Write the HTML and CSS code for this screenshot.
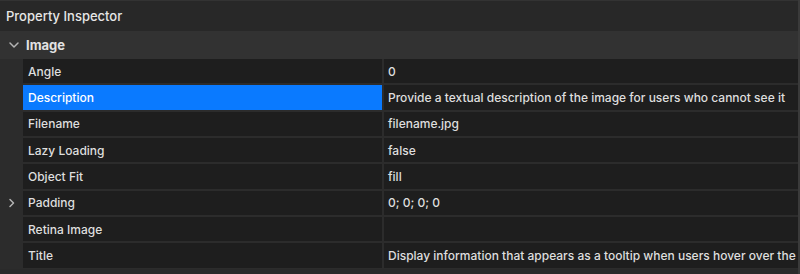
FILE: index.html
```html
<!DOCTYPE html>
<html lang="en">
<head>
  <meta charset="UTF-8">
  <meta name="viewport" content="width=device-width, initial-scale=1">
  <title>Property Inspector</title>
  <link rel="stylesheet" href="styles.css">
</head>
<body>
  <div class="inspector">
    <div class="title-bar">Property Inspector</div>
    <div class="group">
      <div class="group-head">
        <span class="chevron">
          <svg width="12" height="12" viewBox="0 0 12 12"><path d="M2 4l4 4 4-4" fill="none" stroke="#b4b4b4" stroke-width="1.5" stroke-linecap="round" stroke-linejoin="round"/></svg>
        </span>
        <span class="group-name">Image</span>
      </div>
      <div class="props">
        <div class="row">
          <span class="toggle"></span>
          <span class="name">Angle</span>
          <span class="value">0</span>
        </div>
        <div class="row selected">
          <span class="toggle"></span>
          <span class="name">Description</span>
          <span class="value">Provide a textual description of the image for users who cannot see it</span>
        </div>
        <div class="row">
          <span class="toggle"></span>
          <span class="name">Filename</span>
          <span class="value">filename.jpg</span>
        </div>
        <div class="row">
          <span class="toggle"></span>
          <span class="name">Lazy Loading</span>
          <span class="value">false</span>
        </div>
        <div class="row">
          <span class="toggle"></span>
          <span class="name">Object Fit</span>
          <span class="value">fill</span>
        </div>
        <div class="row">
          <span class="toggle">
            <svg width="10" height="12" viewBox="0 0 10 12"><path d="M3 2.5l3.5 3.5L3 9.5" fill="none" stroke="#b4b4b4" stroke-width="1.5" stroke-linecap="round" stroke-linejoin="round"/></svg>
          </span>
          <span class="name">Padding</span>
          <span class="value">0; 0; 0; 0</span>
        </div>
        <div class="row">
          <span class="toggle"></span>
          <span class="name">Retina Image</span>
          <span class="value"></span>
        </div>
        <div class="row">
          <span class="toggle"></span>
          <span class="name">Title</span>
          <span class="value">Display information that appears as a tooltip when users hover over the image</span>
        </div>
      </div>
    </div>
  </div>
</body>
</html>
```

FILE: styles.css
```css
* {
  margin: 0;
  padding: 0;
  box-sizing: border-box;
}

body {
  font-family: Inter, "Liberation Sans", sans-serif;
  font-size: 12px;
  color: #dedede;
  background: #2a2a2a;
  width: 800px;
  height: 274px;
  overflow: hidden;
}

.inspector {
  height: 274px;
  border-right: 2px solid #3a3a3a;
  background: #2a2a2a;
}

.title-bar {
  height: 31px;
  padding: 0 6px;
  display: flex;
  align-items: center;
  font-size: 13px;
  font-weight: 500;
  color: #e6e6e6;
  background: #282828;
  border-top: 1px solid #333;
}

.group {
  background: #2c2c2c;
}

.group-head {
  height: 28px;
  display: flex;
  align-items: center;
  background: #323232;
}

.chevron {
  width: 26px;
  display: flex;
  justify-content: center;
  padding-left: 1px;
}

.group-name {
  font-size: 13px;
  font-weight: 700;
  color: #e2e2e2;
}

.props {
  display: flex;
  flex-direction: column;
  gap: 2px;
  padding-bottom: 1px;
  background: #2c2c2c;
}

.row {
  display: grid;
  grid-template-columns: 23px 359px 1fr;
  height: 24.33px;
  background: #2c2c2c;
}

.toggle {
  display: flex;
  align-items: center;
  justify-content: center;
}

.name,
.value {
  display: flex;
  align-items: center;
  padding-left: 5px;
  background: #1e1e1e;
  white-space: nowrap;
  overflow: hidden;
  font-weight: 500;
}

.value {
  margin-left: 2px;
  padding-left: 4px;
}

.row.selected .name {
  background: #0a7aff;
  color: #fff;
}
```
